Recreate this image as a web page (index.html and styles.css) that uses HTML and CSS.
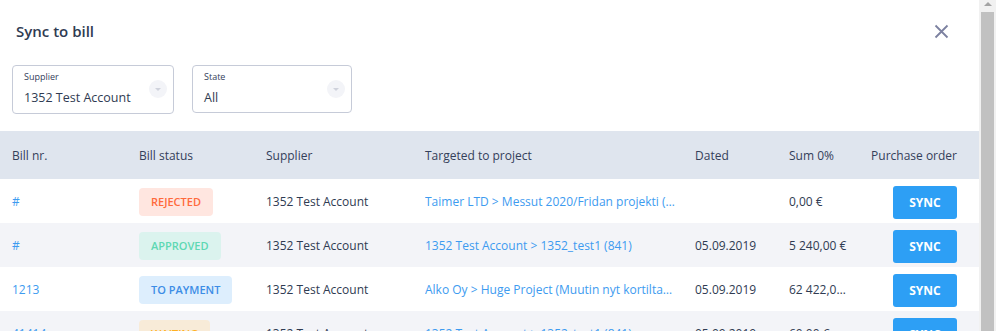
FILE: index.html
```html
<!DOCTYPE html>
<html lang="en">
<head>
    <meta charset="UTF-8">
    <meta name="viewport" content="width=device-width, initial-scale=1.0">
    <title>Sync to bill</title>
    <link rel="stylesheet" href="styles.css">
</head>
<body>
  <div class="page">
    <div class="dialog">
        <div class="header">
            <h1 class="title">Sync to bill</h1>
            <button class="close" type="button">
                <svg width="15" height="15" viewBox="0 0 15 15"><path d="M1.5 1.5 L13.5 13.5 M13.5 1.5 L1.5 13.5" stroke="#7c81a0" stroke-width="1.8" fill="none"/></svg>
            </button>
        </div>

        <div class="filters">
            <div class="select supplier">
                <span class="select-label">Supplier</span>
                <span class="select-value">1352 Test Account</span>
                <span class="select-arrow"></span>
            </div>
            <div class="select state">
                <span class="select-label">State</span>
                <span class="select-value">All</span>
                <span class="select-arrow"></span>
            </div>
        </div>

        <div class="table">
            <div class="row head">
                <div>Bill nr.</div>
                <div>Bill status</div>
                <div>Supplier</div>
                <div>Targeted to project</div>
                <div>Dated</div>
                <div>Sum 0%</div>
                <div class="right">Purchase order</div>
            </div>
            <div class="row">
                <div class="link">#</div>
                <div><span class="badge rejected">Rejected</span></div>
                <div>1352 Test Account</div>
                <div class="link cut">Taimer LTD &gt; Messut 2020/Fridan projekti (Fridan projekti)</div>
                <div></div>
                <div class="cut">0,00 €</div>
                <div class="right"><button class="sync">SYNC</button></div>
            </div>
            <div class="row alt">
                <div class="link">#</div>
                <div><span class="badge approved">Approved</span></div>
                <div>1352 Test Account</div>
                <div class="link cut">1352 Test Account &gt; 1352_test1 (841)</div>
                <div>05.09.2019</div>
                <div class="cut">5 240,00 €</div>
                <div class="right"><button class="sync">SYNC</button></div>
            </div>
            <div class="row">
                <div class="link">1213</div>
                <div><span class="badge payment">To payment</span></div>
                <div>1352 Test Account</div>
                <div class="link cut">Alko Oy &gt; Huge Project (Muutin nyt kortiltakin nimeä)</div>
                <div>05.09.2019</div>
                <div class="cut">62 422,00 €</div>
                <div class="right"><button class="sync">SYNC</button></div>
            </div>
            <div class="row alt">
                <div class="link">41414</div>
                <div><span class="badge waiting">Waiting</span></div>
                <div>1352 Test Account</div>
                <div class="link cut">1352 Test Account &gt; 1352_test1 (841)</div>
                <div>05.09.2019</div>
                <div class="cut">60,00 €</div>
                <div class="right"><button class="sync">SYNC</button></div>
            </div>
        </div>
    </div>

    <div class="scrollbar">
        <div class="scroll-up"></div>
        <div class="scroll-thumb"></div>
    </div>
  </div>
</body>
</html>
```

FILE: styles.css
```css
html, body {
    margin: 0;
    height: 100%;
    overflow: hidden;
}
body {
    font-family: "Open Sans", sans-serif;
    color: #34405a;
    background-color: white;
}
.page {
    display: flex;
    height: 331px;
}
.dialog {
    flex: 1;
    overflow: hidden;
}
.header {
    display: flex;
    justify-content: space-between;
    align-items: center;
    height: 62px;
    padding: 0 30px 0 16px;
}
.title {
    margin: 0;
    font-size: 15px;
    font-weight: 600;
    color: #2f3b52;
}
.close {
    border: none;
    background: none;
    padding: 0;
    width: 15px;
    height: 15px;
    cursor: pointer;
}
.filters {
    display: flex;
    gap: 18px;
    padding: 3px 12px 17px;
}
.select {
    position: relative;
    display: flex;
    flex-direction: column;
    height: 47px;
    padding: 0 11px;
    border: 1px solid #c6cbd8;
    border-radius: 4px;
    box-sizing: border-box;
}
.supplier {
    width: 162px;
    height: 49px;
}
.state {
    width: 160px;
    height: 48px;
}
.select-label {
    margin-top: 4px;
    font-size: 9px;
    color: #34405a;
}
.select-value {
    margin-top: 6px;
    font-size: 12.5px;
    color: #2f3b52;
}
.select-arrow {
    position: absolute;
    right: 6px;
    top: 14px;
    width: 18px;
    height: 18px;
    border-radius: 50%;
    background: #f3f4f8;
}
.select-arrow::after {
    content: "";
    position: absolute;
    left: 6px;
    top: 8px;
    border-left: 3px solid transparent;
    border-right: 3px solid transparent;
    border-top: 3px solid #cfd2dc;
}
.table {
    font-size: 12px;
}
.row {
    display: grid;
    grid-template-columns: 127px 127px 159px 270px 94px 81px 1fr;
    align-items: center;
    height: 44px;
    padding-left: 12px;
    color: #2f3b52;
}
.row > div {
    white-space: nowrap;
}
.row.head {
    height: 48px;
    background-color: #dfe5ee;
    font-weight: 500;
    color: #34405a;
}
.row.alt {
    background-color: #f3f4f8;
}
.cut {
    overflow: hidden;
    text-overflow: ellipsis;
    padding-right: 18px;
}
.link {
    color: #3d9bf0;
}
.right {
    text-align: right;
    padding-right: 22px;
}
.badge {
    display: inline-block;
    height: 28px;
    line-height: 28px;
    padding: 0 12px;
    border-radius: 4px;
    font-size: 11px;
    font-weight: 600;
    text-transform: uppercase;
    margin-top: 1px;
}
.rejected {
    background-color: #ffe6e0;
    color: #ff6a3c;
}
.approved {
    background-color: #dbf3ee;
    color: #5ed8b3;
}
.payment {
    background-color: #ddeefd;
    color: #3c8de6;
}
.waiting {
    background-color: #f8ebd8;
    color: #ffb020;
}
.sync {
    width: 64px;
    height: 33px;
    margin-top: 2px;
    border: none;
    border-radius: 3px;
    background-color: #2d9ff5;
    color: white;
    font-family: "Open Sans", sans-serif;
    font-size: 12px;
    font-weight: 700;
    cursor: pointer;
}
.scrollbar {
    display: flex;
    flex-direction: column;
    width: 17px;
    background-color: #f1f1f1;
}
.scroll-up {
    position: relative;
    height: 12px;
}
.scroll-up::after {
    content: "";
    position: absolute;
    left: 5px;
    top: 2px;
    border-left: 4px solid transparent;
    border-right: 4px solid transparent;
    border-bottom: 4px solid #a3a3a3;
}
.scroll-thumb {
    flex: 1;
    margin: 0 2px;
    background-color: #c1c1c1;
}
```
